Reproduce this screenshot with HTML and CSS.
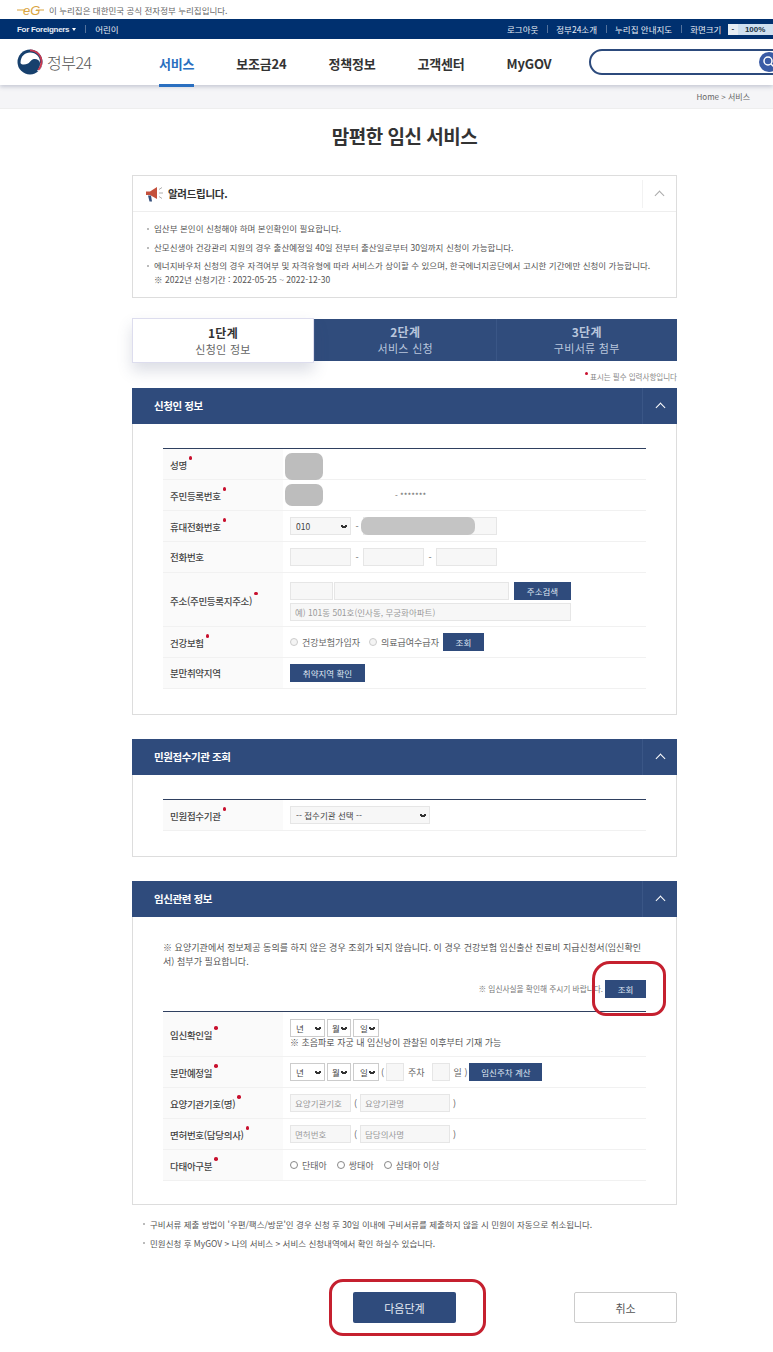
FILE: index.html
```html
<!DOCTYPE html>
<html lang="ko">
  <head>
    <meta charset="UTF-8" />
    <meta name="viewport" content="width=device-width, initial-scale=1.0" />
    <title>맘편한 임신 서비스</title>
    <link rel="stylesheet" href="styles.css">
  </head>
  <body>
    <div class="gov-strip">
        <svg class="eg-logo" width="27" height="12" viewBox="0 0 27 12">
            <path d="M0 6h8M19 6h8" stroke="#d9a441" stroke-width="1.200" />
            <text x="6" y="10.500" font-size="13" font-style="italic" font-family="Liberation Sans, sans-serif" fill="#d9a441">eG</text>
        </svg>
        <span>이 누리집은 대한민국 공식 전자정부 누리집입니다.</span>
    </div>

    <div class="util-bar">
        <div class="util-left">
            <span class="foreign">For Foreigners <i class="caret"></i></span>
            <span class="util-sep"></span>
            <span>어린이</span>
        </div>
        <div class="util-right">
            <span>로그아웃</span>
            <span class="util-sep"></span>
            <span>정부24소개</span>
            <span class="util-sep"></span>
            <span>누리집 안내지도</span>
            <span class="util-sep"></span>
            <span>화면크기</span>
            <span class="zoom-ctl"><b>-</b><em>100%</em></span>
        </div>
    </div>

    <header class="main-head">
        <div class="logo">
            <svg width="26" height="26" viewBox="0 0 26 26">
                <circle cx="13" cy="13" r="12.500" fill="#17406d" />
                <path d="M3.500 14C3.500 7 8 3.500 13 3.500c6 0 10.500 4.500 10 10.500-.5-3-3.500-4.500-6-4-3 .5-3.500 3-6 4.500-3 1.500-6.500 1.500-7.500-.5z" fill="#fff" />
                <path d="M23 14c.3 3-1 6-3 8l2.500.5L25 16z" fill="#fff" />
                <path d="M13 1.300c6.500 0 11.500 5 11.500 11.500 0 3.200-1.200 6-3.200 8.200" fill="none" stroke="#c8374f" stroke-width="1.800" />
            </svg>
            <span class="logo-text">정부24</span>
        </div>
        <nav class="gnb">
            <a class="on">서비스</a>
            <a>보조금24</a>
            <a>정책정보</a>
            <a>고객센터</a>
            <a>MyGOV</a>
        </nav>
        <div class="search-box">
            <span class="search-btn">
                <svg width="14" height="14" viewBox="0 0 14 14"><circle cx="6" cy="6" r="4" fill="none" stroke="#fff" stroke-width="1.500" /><path d="M9 9l3 3" stroke="#fff" stroke-width="1.500" /></svg>
            </span>
        </div>
    </header>

    <div class="crumb">Home &gt; 서비스</div>

    <main class="wrap">
        <h1 class="page-title">맘편한 임신 서비스</h1>

        <section class="notice">
            <div class="notice-head">
                <svg width="20" height="18" viewBox="0 0 20 18">
                    <path d="M1 6.500h4L12 2v12L5 10H1z" fill="#c4503c" />
                    <path d="M3 10.500h3l1 6H4.500z" fill="#36507c" />
                    <path d="M14 8h4M14 4.500l3-2M14 11.500l3 2" stroke="#999" stroke-width=".8" />
                </svg>
                <strong>알려드립니다.</strong>
                <span class="notice-toggle"><i class="chev grey"></i></span>
            </div>
            <ul class="notice-list">
                <li>임산부 본인이 신청해야 하며 본인확인이 필요합니다.</li>
                <li>산모신생아 건강관리 지원의 경우 출산예정일 40일 전부터 출산일로부터 30일까지 신청이 가능합니다.</li>
                <li>에너지바우처 신청의 경우 자격여부 및 자격유형에 따라 서비스가 상이할 수 있으며, 한국에너지공단에서 고시한 기간에만 신청이 가능합니다.<br>※ 2022년 신청기간 : 2022-05-25 ~ 2022-12-30</li>
            </ul>
        </section>

        <div class="steps">
            <div class="step active"><b>1단계</b><span>신청인 정보</span></div>
            <div class="step"><b>2단계</b><span>서비스 신청</span></div>
            <div class="step"><b>3단계</b><span>구비서류 첨부</span></div>
        </div>

        <p class="req-note"><i class="dot"></i> 표시는 필수 입력사항입니다</p>

        <section class="panel">
            <div class="panel-head"><h2>신청인 정보</h2><span class="panel-toggle"><i class="chev"></i></span></div>
            <div class="panel-body first">
                <table class="form-table">
                    <tr>
                        <th class="req">성명</th>
                        <td class="has-blot"><span class="blot blot-name"></span></td>
                    </tr>
                    <tr>
                        <th class="req">주민등록번호</th>
                        <td class="has-blot"><span class="blot blot-id"></span><span class="rrn">- *******</span></td>
                    </tr>
                    <tr>
                        <th class="req">휴대전화번호</th>
                        <td class="has-blot">
                            <div class="line phone">
                                <select class="sel sel-phone"><option>010</option></select>
                                <span class="dash">-</span>
                                <input class="inp w61" type="text">
                                <span class="dash">-</span>
                                <input class="inp w61" type="text">
                            </div>
                            <span class="blot blot-phone"></span>
                        </td>
                    </tr>
                    <tr>
                        <th>전화번호</th>
                        <td>
                            <div class="line phone">
                                <input class="inp w61" type="text">
                                <span class="dash">-</span>
                                <input class="inp w61" type="text">
                                <span class="dash">-</span>
                                <input class="inp w61" type="text">
                            </div>
                        </td>
                    </tr>
                    <tr class="row-addr">
                        <th class="req">주소(주민등록지주소)</th>
                        <td>
                            <div class="addr-top">
                                <input class="inp w43" type="text">
                                <input class="inp w175" type="text">
                                <button class="btn addr-btn" type="button">주소검색</button>
                            </div>
                            <input class="inp w281" type="text" placeholder="예) 101동 501호(인사동, 무궁화아파트)">
                        </td>
                    </tr>
                    <tr>
                        <th class="req">건강보험</th>
                        <td>
                            <div class="line">
                                <label class="radio faint"><i></i>건강보험가입자</label>
                                <label class="radio faint"><i></i>의료급여수급자</label>
                                <button class="btn w41" type="button">조회</button>
                            </div>
                        </td>
                    </tr>
                    <tr>
                        <th>분만취약지역</th>
                        <td><button class="btn w75" type="button">취약지역 확인</button></td>
                    </tr>
                </table>
            </div>
        </section>

        <section class="panel">
            <div class="panel-head"><h2>민원접수기관 조회</h2><span class="panel-toggle"><i class="chev"></i></span></div>
            <div class="panel-body second">
                <table class="form-table">
                    <tr>
                        <th class="req">민원접수기관</th>
                        <td><select class="sel sel-org"><option>-- 접수기관 선택 --</option></select></td>
                    </tr>
                </table>
            </div>
        </section>

        <section class="panel">
            <div class="panel-head"><h2>임신관련 정보</h2><span class="panel-toggle"><i class="chev"></i></span></div>
            <div class="panel-body third">
                <p class="consent">※ 요양기관에서 정보제공 동의를 하지 않은 경우 조회가 되지 않습니다. 이 경우 건강보험 임신출산 진료비 지급신청서(임신확인<br>서) 첨부가 필요합니다.</p>
                <div class="check-row">
                    <span>※ 임신사실을 확인해 주시기 바랍니다.</span>
                    <button class="btn w41" type="button">조회</button>
                </div>
                <table class="form-table">
                    <tr class="row-date">
                        <th class="req">임신확인일</th>
                        <td>
                            <div class="line tight">
                                <select class="sel sel-y"><option>년</option></select>
                                <select class="sel sel-m"><option>월</option></select>
                                <select class="sel sel-d"><option>일</option></select>
                            </div>
                            <p class="date-note">※ 초음파로 자궁 내 임신낭이 관찰된 이후부터 기재 가능</p>
                        </td>
                    </tr>
                    <tr>
                        <th class="req">분만예정일</th>
                        <td>
                            <div class="line tight">
                                <select class="sel sel-y"><option>년</option></select>
                                <select class="sel sel-m"><option>월</option></select>
                                <select class="sel sel-d"><option>일</option></select>
                                <span class="paren">(</span>
                                <input class="inp w18" type="text">
                                <span class="unit">주차</span>
                                <input class="inp w18" type="text">
                                <span class="unit last">일 )</span>
                                <button class="btn w73" type="button">임신주차 계산</button>
                            </div>
                        </td>
                    </tr>
                    <tr>
                        <th class="req">요양기관기호(명)</th>
                        <td>
                            <div class="line parens">
                                <input class="inp w61" type="text" placeholder="요양기관기호">
                                <span class="paren">(</span>
                                <input class="inp w91" type="text" placeholder="요양기관명">
                                <span class="paren">)</span>
                            </div>
                        </td>
                    </tr>
                    <tr>
                        <th class="req">면허번호(담당의사)</th>
                        <td>
                            <div class="line parens">
                                <input class="inp w61" type="text" placeholder="면허번호">
                                <span class="paren">(</span>
                                <input class="inp w91" type="text" placeholder="담당의사명">
                                <span class="paren">)</span>
                            </div>
                        </td>
                    </tr>
                    <tr>
                        <th class="req">다태아구분</th>
                        <td>
                            <div class="line">
                                <label class="radio"><i></i>단태아</label>
                                <label class="radio"><i></i>쌍태아</label>
                                <label class="radio"><i></i>삼태아 이상</label>
                            </div>
                        </td>
                    </tr>
                </table>
            </div>
        </section>

        <ul class="foot-notes">
            <li>구비서류 제출 방법이 '우편/팩스/방문'인 경우 신청 후 30일 이내에 구비서류를 제출하지 않을 시 민원이 자동으로 취소됩니다.</li>
            <li>민원신청 후 MyGOV &gt; 나의 서비스 &gt; 서비스 신청내역에서 확인 하실수 있습니다.</li>
        </ul>

        <div class="actions">
            <button class="next" type="button">다음단계</button>
            <button class="cancel" type="button">취소</button>
        </div>
    </main>

    <div class="mark mark-check"></div>
    <div class="mark mark-next"></div>
  </body>
</html>
```

FILE: styles.css
```css
* {
  margin: 0;
  padding: 0;
  box-sizing: border-box;
}

html, body {
  overflow-x: hidden;
}

body {
  position: relative;
  width: 773px;
  height: 1352px;
  overflow: hidden;
  background: #fff;
  color: #444;
  font-family: "Noto Sans CJK KR", "Noto Sans", sans-serif;
  font-size: 9px;
}

/* top bars */
.gov-strip {
  height: 19px;
  padding-left: 17px;
  display: flex;
  align-items: center;
  gap: 5px;
  font-size: 8.5px;
  color: #666;
}

.util-bar {
  height: 20px;
  padding-left: 17px;
  display: flex;
  justify-content: space-between;
  align-items: center;
  background: #00306f;
  color: #e8edf5;
  font-size: 8.5px;
  white-space: nowrap;
}

.util-left, .util-right {
  display: flex;
  align-items: center;
  gap: 9px;
}

.util-right {
  gap: 8.5px;
  width: 266px;
  flex: none;
}

.foreign {
  font-family: "Liberation Sans", sans-serif;
  font-weight: bold;
  font-size: 8px;
  letter-spacing: -.3px;
}

.caret {
  display: inline-block;
  margin-left: 1px;
  vertical-align: 1px;
  border-left: 2px solid transparent;
  border-right: 2px solid transparent;
  border-top: 3px solid #fff;
}

.util-sep {
  width: 1px;
  height: 8px;
  background: #55729c;
}

.zoom-ctl {
  display: flex;
  align-items: center;
  flex: 1;
  height: 11px;
  margin-left: -2px;
  background: #cfe0f0;
  color: #234;
  font-family: "Liberation Sans", sans-serif;
  font-size: 8px;
  font-weight: bold;
}

.zoom-ctl b {
  width: 10px;
  height: 11px;
  line-height: 10px;
  text-align: center;
  background: #e6edf4;
}

.zoom-ctl em {
  margin-left: 7px;
  font-style: normal;
}

.main-head {
  position: relative;
  height: 46px;
  display: flex;
  align-items: center;
  padding-left: 17px;
  background: #fff;
  box-shadow: 0 2px 4px rgba(60, 70, 110, .25);
  white-space: nowrap;
}

.logo {
  display: flex;
  align-items: center;
  gap: 4px;
  width: 142px;
}

.logo-text {
  font-size: 16px;
  font-weight: 300;
  color: #555;
  letter-spacing: -.5px;
}

.gnb {
  display: flex;
  gap: 42px;
  height: 46px;
  font-size: 13px;
  font-weight: 700;
  letter-spacing: -.2px;
  color: #333;
}

.gnb a {
  display: flex;
  align-items: center;
  height: 48px;
  padding-top: 3px;
  border-bottom: 3px solid transparent;
}

.gnb .on {
  color: #2a6fc0;
  border-bottom-color: #2a6fc0;
}

.search-box {
  position: absolute;
  left: 589px;
  top: 10px;
  width: 210px;
  height: 26px;
  border: 2px solid #2c4a7c;
  border-radius: 13px;
}

.search-btn {
  position: absolute;
  left: 168px;
  top: 1px;
  width: 20px;
  height: 20px;
  border-radius: 50%;
  background: #3a5ba5;
  display: flex;
  align-items: center;
  justify-content: center;
}

.crumb {
  height: 24px;
  padding: 6px 23px 0 0;
  text-align: right;
  background: #f5f5f7;
  border-bottom: 1px solid #eee;
  font-size: 8px;
  color: #666;
}

/* content */
.wrap {
  width: 545px;
  margin-left: 132px;
}

.page-title {
  padding-top: 14px;
  height: 66px;
  text-align: center;
  font-size: 19px;
  line-height: 26px;
  font-weight: 700;
  color: #333;
  letter-spacing: -.5px;
}

.notice {
  height: 123px;
  border: 1px solid #ddd;
}

.notice-head {
  height: 36px;
  display: flex;
  align-items: center;
  padding-left: 12px;
  gap: 3px;
  border-bottom: 1px solid #eee;
}

.notice-head strong {
  font-size: 10.5px;
  color: #333;
  letter-spacing: -.3px;
}

.notice-toggle {
  margin-left: auto;
  width: 34px;
  height: 28px;
  display: flex;
  align-items: center;
  justify-content: center;
  border-left: 1px solid #f2f2f2;
}

.chev {
  display: block;
  width: 7px;
  height: 7px;
  margin-top: 3px;
  border-left: 1px solid #fff;
  border-top: 1px solid #fff;
  transform: rotate(45deg);
}

.chev.grey {
  border-color: #aaa;
}

.notice-list {
  list-style: none;
  padding: 10px 0 0 21px;
  line-height: 13.500px;
  font-size: 8.5px;
  letter-spacing: .03px;
  color: #555;
}

.notice-list li, .foot-notes li {
  position: relative;
  margin-bottom: 5px;
  white-space: nowrap;
}

.notice-list li::before, .foot-notes li::before {
  content: "";
  position: absolute;
  left: -7px;
  top: 6px;
  width: 2px;
  height: 2px;
  background: #bbb;
}

.steps {
  display: flex;
  height: 42px;
  margin-top: 21px;
  background: #304c7c;
  color: #b9c6dc;
  text-align: center;
}

.step {
  flex: 1;
  display: flex;
  flex-direction: column;
  justify-content: center;
  border-left: 1px solid #3a5686;
  font-size: 11px;
  letter-spacing: .3px;
  line-height: 17px;
}

.step b {
  font-size: 12px;
}

.step.active {
  position: relative;
  margin: -1px 0 -2px;
  flex: none;
  width: 182px;
  background: #fff;
  border: 1px solid #dde;
  color: #666;
  box-shadow: 0 8px 14px rgba(60, 70, 110, .18);
}

.step.active b {
  color: #333;
}

.req-note {
  height: 27px;
  padding-top: 10px;
  text-align: right;
  font-size: 7.5px;
  line-height: 12px;
  color: #888;
}

.dot {
  display: inline-block;
  width: 3px;
  height: 3px;
  vertical-align: 5px;
  border-radius: 50%;
  background: #c8102e;
}

.panel-head {
  height: 36px;
  display: flex;
  align-items: center;
  padding-left: 22px;
  background: #2f4b7c;
  color: #fff;
}

.panel-head h2 {
  padding-bottom: 2px;
  font-size: 10.5px;
  letter-spacing: -.4px;
}

.panel-toggle {
  margin-left: auto;
  width: 35px;
  height: 36px;
  display: flex;
  align-items: center;
  justify-content: center;
  border-left: 1px solid #3a5686;
}

.panel-body {
  border: 1px solid #ddd;
  border-top: none;
  padding: 24px 30px 0;
}

.panel-body.first {
  height: 291px;
  margin-bottom: 24px;
}

.panel-body.second {
  height: 82px;
  margin-bottom: 24px;
}

.panel-body.third {
  height: 288px;
}

/* form table */
.form-table {
  width: 483px;
  border-collapse: collapse;
  border-top: 1px solid #2f4060;
  table-layout: fixed;
  font-size: 9px;
}

.form-table tr {
  height: 31px;
  border-bottom: 1px solid #f1f1f1;
}

.form-table th {
  width: 120px;
  padding-left: 7px;
  background: #fafafa;
  text-align: left;
  font-weight: 500;
  font-size: 9.5px;
  letter-spacing: -.3px;
  color: #444;
  white-space: nowrap;
}

.form-table th.req::after {
  content: "";
  display: inline-block;
  width: 3.5px;
  height: 3.5px;
  margin-left: 2px;
  vertical-align: 9px;
  border-radius: 50%;
  background: #c8102e;
}

.form-table td {
  padding-left: 7px;
  white-space: nowrap;
}

.form-table .row-addr {
  height: 54px;
}

.form-table .row-addr td {
  padding-top: 3px;
}

.form-table .row-date {
  height: 45px;
}

.line {
  display: flex;
  align-items: center;
  gap: 5px;
}

.line.tight, .line.phone {
  gap: 2px;
}

.line.parens {
  gap: 3px;
}

.dash {
  width: 8px;
  text-align: center;
  color: #666;
}

.inp {
  display: block;
  height: 18px;
  padding-left: 4px;
  border: 1px solid #e6e6e6;
  background: #f7f7f7;
  font-family: inherit;
  font-size: 8.5px;
  color: #999;
}

.inp::placeholder {
  color: #9a9a9a;
}

.w18 { width: 18px; }
.w43 { width: 43px; }
.w61 { width: 61px; }
.w91 { width: 90px; }
.w175 { width: 175px; }
.w281 { width: 281px; }

.sel {
  appearance: none;
  height: 18px;
  padding-left: 5px;
  border: 1px solid #ccc;
  background-color: #fff;
  background-image: linear-gradient(45deg, transparent 30%, #333 30%, #333 70%, transparent 70%), linear-gradient(135deg, transparent 30%, #333 30%, #333 70%, transparent 70%);
  background-position: right 6px center, right 3px center;
  background-size: 3px 3px;
  background-repeat: no-repeat;
  font-family: inherit;
  font-size: 8.5px;
  color: #444;
}

.sel-phone {
  width: 61px;
  border-color: #e6e6e6;
  background-color: #f7f7f7;
}

.sel-org {
  display: block;
  width: 140px;
  border-color: #e6e6e6;
  background-color: #f7f7f7;
}

.sel-y { width: 35px; }
.sel-m { width: 24px; padding-left: 4px; }
.sel-d { width: 26px; padding-left: 6px; }

.btn {
  height: 18px;
  border: none;
  background: #2f4b7c;
  color: #dfe6f2;
  font-family: inherit;
  font-size: 8.5px;
}

.w41 { width: 41px; }
.w73 { width: 73px; }
.w75 { display: block; width: 75px; }

.addr-top {
  display: flex;
  align-items: center;
  margin-bottom: 3px;
}

.addr-top .w175 {
  margin-left: 1px;
}

.addr-btn {
  width: 57px;
  margin-left: 5px;
}

.radio {
  display: flex;
  align-items: center;
  gap: 4px;
  margin-right: 5px;
  font-size: 9px;
  color: #666;
}

.radio i {
  width: 8px;
  height: 8px;
  border: 1px solid #888;
  border-radius: 50%;
}

.radio.faint i {
  border-color: #ccc;
  background: #f4f4f4;
}

.radio.faint {
  margin-right: 4px;
}

.radio.faint + .radio.faint {
  margin-right: -1px;
}

.rrn {
  margin-left: 105px;
  font-size: 8px;
  color: #666;
}

.date-note {
  font-size: 9px;
  line-height: 12px;
  color: #555;
}

.paren, .unit {
  color: #666;
  font-size: 9px;
}

.unit {
  margin: 0 5px 0 2px;
}

.unit.last {
  margin: 0 0 0 2px;
}

.consent {
  width: 483px;
  height: 33px;
  font-size: 9px;
  letter-spacing: .05px;
  line-height: 14px;
  color: #555;
  white-space: nowrap;
}

.check-row {
  height: 37px;
  display: flex;
  align-items: flex-start;
  justify-content: flex-end;
  gap: 2px;
  padding-top: 6px;
  font-size: 7.700px;
  line-height: 18px;
  color: #777;
}

/* blurred-out personal data, lies over the cell */
.has-blot {
  position: relative;
}

.blot {
  position: absolute;
  background: #bdbdbd;
  border-radius: 7px;
}

.blot-name {
  left: 2px;
  top: 4px;
  width: 38px;
  height: 27px;
}

.blot-id {
  left: 2px;
  top: 4px;
  width: 38px;
  height: 22px;
}

.blot-phone {
  left: 78px;
  top: 6px;
  width: 114px;
  height: 18px;
  background: #c4c4c4;
}

.foot-notes {
  list-style: none;
  padding: 12px 0 0 18px;
  font-size: 8.5px;
  line-height: 14px;
  color: #555;
}

.actions {
  position: relative;
  display: flex;
  justify-content: space-between;
  margin-top: 42px;
  padding-left: 221px;
}

.next, .cancel {
  width: 103px;
  height: 31px;
  border-radius: 2px;
  font-family: inherit;
  font-size: 11px;
}

.next {
  border: none;
  background: #2f4b7c;
  color: #e6ebf4;
}

.cancel {
  border: 1px solid #ccc;
  background: #fff;
  color: #555;
}

/* hand-drawn red marks on the screenshot */
.mark {
  position: absolute;
  border: 3px solid #c5202f;
  border-radius: 14px;
}

.mark-check {
  left: 592px;
  top: 961px;
  width: 74px;
  height: 55px;
  border-top-left-radius: 18px;
}

.mark-next {
  left: 329px;
  top: 1279px;
  width: 157px;
  height: 57px;
}
```
